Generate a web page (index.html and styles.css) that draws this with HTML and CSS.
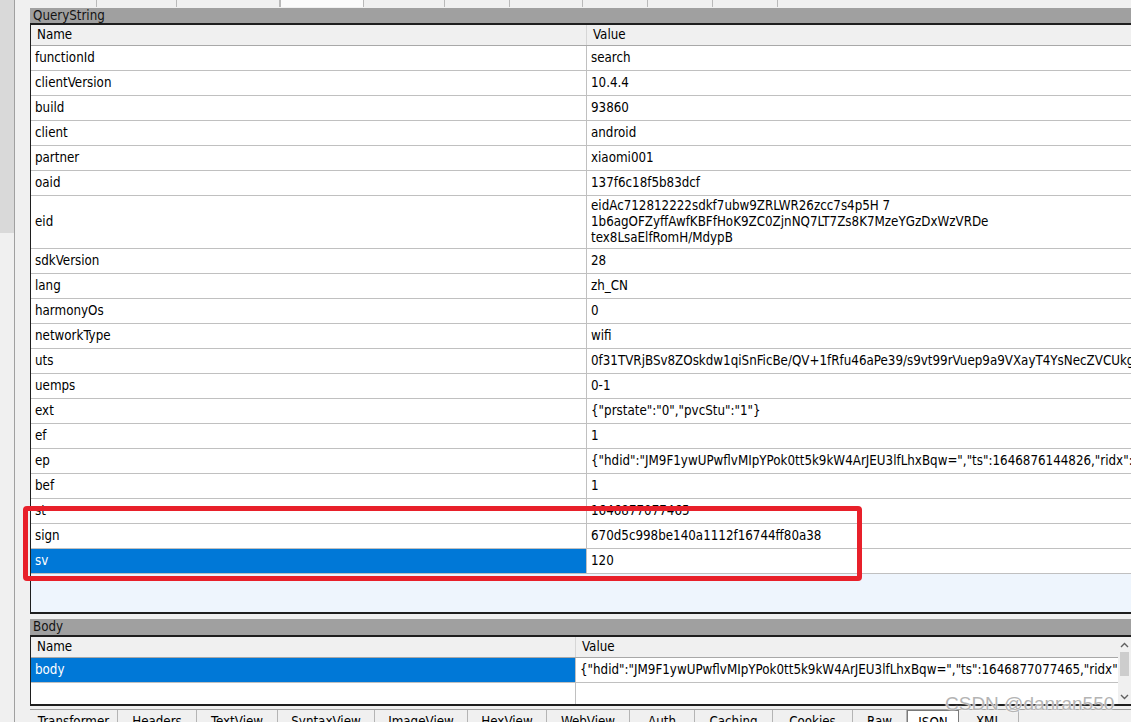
FILE: index.html
```html
<!DOCTYPE html>
<html>
<head>
<meta charset="utf-8">
<link rel="stylesheet" href="styles.css">
</head>
<body>
<div class="app">
  <div class="side">
    <div class="sscroll"><div class="sthumb"></div></div>
    <div class="sline"></div>
    <div class="sgap"></div>
  </div>
  <div class="main">
    <div class="toptabs">
      <div class="tt w67"></div>
      <div class="tt w80"></div>
      <div class="tt w103"></div>
      <div class="tt sel w84"></div>
      <div class="tt w81"></div>
      <div class="tt w65"></div>
      <div class="tt w73"></div>
      <div class="tt w65"></div>
      <div class="tt w65"></div>
      <div class="tt w65"></div>
    </div>

    <section class="panel">
      <div class="ptitle">QueryString</div>
      <div class="grid qs">
        <div class="hrow"><div class="hc">Name</div><div class="hc">Value</div></div>
        <div class="row"><div class="c n">functionId</div><div class="c v">search</div></div>
        <div class="row"><div class="c n">clientVersion</div><div class="c v">10.4.4</div></div>
        <div class="row"><div class="c n">build</div><div class="c v">93860</div></div>
        <div class="row"><div class="c n">client</div><div class="c v">android</div></div>
        <div class="row"><div class="c n">partner</div><div class="c v">xiaomi001</div></div>
        <div class="row"><div class="c n">oaid</div><div class="c v">137f6c18f5b83dcf</div></div>
        <div class="row tall"><div class="c n">eid</div><div class="c v">eidAc712812222sdkf7ubw9ZRLWR26zcc7s4p5H 7<br>1b6agOFZyffAwfKBFfHoK9ZC0ZjnNQ7LT7Zs8K7MzeYGzDxWzVRDe<br>tex8LsaElfRomH/MdypB</div></div>
        <div class="row"><div class="c n">sdkVersion</div><div class="c v">28</div></div>
        <div class="row"><div class="c n">lang</div><div class="c v">zh_CN</div></div>
        <div class="row"><div class="c n">harmonyOs</div><div class="c v">0</div></div>
        <div class="row"><div class="c n">networkType</div><div class="c v">wifi</div></div>
        <div class="row"><div class="c n">uts</div><div class="c v">0f31TVRjBSv8ZOskdw1qiSnFicBe/QV+1fRfu46aPe39/s9vt99rVuep9a9VXayT4YsNecZVCUkgW</div></div>
        <div class="row"><div class="c n">uemps</div><div class="c v">0-1</div></div>
        <div class="row"><div class="c n">ext</div><div class="c v">{"prstate":"0","pvcStu":"1"}</div></div>
        <div class="row"><div class="c n">ef</div><div class="c v">1</div></div>
        <div class="row"><div class="c n">ep</div><div class="c v">{"hdid":"JM9F1ywUPwflvMIpYPok0tt5k9kW4ArJEU3lfLhxBqw=","ts":1646876144826,"ridx":</div></div>
        <div class="row"><div class="c n">bef</div><div class="c v">1</div></div>
        <div class="row"><div class="c n">st</div><div class="c v">1646877077465</div></div>
        <div class="row"><div class="c n">sign</div><div class="c v">670d5c998be140a1112f16744ff80a38</div></div>
        <div class="row sel"><div class="c n">sv</div><div class="c v">120</div></div>
        <div class="fill"></div>
      </div>
    </section>

    <section class="panel bodypanel">
      <div class="ptitle">Body</div>
      <div class="bbox">
        <div class="grid bd">
          <div class="hrow"><div class="hc">Name</div><div class="hc">Value</div></div>
          <div class="row sel"><div class="c n">body</div><div class="c v">{"hdid":"JM9F1ywUPwflvMIpYPok0tt5k9kW4ArJEU3lfLhxBqw=","ts":1646877077465,"ridx"</div></div>
          <div class="erow"><div class="c n"></div><div class="c v"></div></div>
        </div>
        <div class="vscroll">
          <div class="arrow up"><svg width="9" height="6" viewBox="0 0 9 6"><path d="M1 5 L4.5 1.5 L8 5" fill="none" stroke="#606060" stroke-width="1.4"/></svg></div>
          <div class="vthumb"></div>
          <div class="vtrack"></div>
          <div class="arrow dn"><svg width="9" height="6" viewBox="0 0 9 6"><path d="M1 1 L4.5 4.5 L8 1" fill="none" stroke="#606060" stroke-width="1.4"/></svg></div>
        </div>
      </div>
    </section>

    <div class="bgap"></div>
    <div class="btabs">
      <div class="bt w88">Transformer</div>
      <div class="bt w79">Headers</div>
      <div class="bt w81">TextView</div>
      <div class="bt w97">SyntaxView</div>
      <div class="bt w93">ImageView</div>
      <div class="bt w79">HexView</div>
      <div class="bt w83">WebView</div>
      <div class="bt w65">Auth</div>
      <div class="bt w78">Caching</div>
      <div class="bt w80">Cookies</div>
      <div class="bt w54">Raw</div>
      <div class="bt selb w52">JSON</div>
      <div class="bt w60">XML</div>
    </div>
  </div>
</div>
<div class="redbox"></div>
<div class="wm">CSDN @danran550</div>
</body>
</html>
```

FILE: styles.css
```css
* { box-sizing: border-box; }
html, body { margin: 0; padding: 0; }
body {
  width: 1131px;
  height: 722px;
  overflow: hidden;
  background: #f0f0f0;
  font-family: "DejaVu Sans Condensed", "DejaVu Sans", sans-serif;
  font-size: 13.25px;
  color: #000;
  position: relative;
}
.app { display: flex; height: 722px; }

.side { width: 30px; flex: none; display: flex; }
.sscroll { width: 14px; background: #f0f0f0; }
.sthumb { height: 233px; background: #d9d9d9; }
.sline { width: 1px; background: #a0a0a0; }
.sgap { flex: 1; background: #f0f0f0; }

.main { width: 1101px; flex: none; display: flex; flex-direction: column; overflow: hidden; }

.toptabs { height: 8px; display: flex; flex: none; }
.tt { height: 7px; border-right: 1px solid #b9b9b9; background: #f0f0f0; flex: none; }
.tt.sel { background: #fbfbfb; border-left: 1px solid #b9b9b9; }
.w52 { width: 52px; } .w54 { width: 54px; } .w60 { width: 60px; } .w65 { width: 65px; }
.w67 { width: 67px; } .w73 { width: 73px; } .w78 { width: 78px; } .w79 { width: 79px; }
.w80 { width: 80px; } .w81 { width: 81px; } .w83 { width: 83px; } .w84 { width: 84px; }
.w88 { width: 88px; } .w93 { width: 93px; } .w97 { width: 97px; } .w103 { width: 103px; }

.panel { flex: none; }
.ptitle {
  height: 15px;
  line-height: 15px;
  background: #a0a0a0;
  padding-left: 3px;
  color: #141414;
  white-space: nowrap;
}
.bodypanel { margin-top: 5px; }
.bodypanel .ptitle { height: 16px; line-height: 15px; }

.grid {
  background: #fff;
  border-left: 1px solid #1e1e1e;
  border-top: 2px solid #1e1e1e;
  border-bottom: 2px solid #1e1e1e;
}
.hrow {
  display: grid;
  height: 21px;
  line-height: 20px;
  background: #f0f0f0;
  border-bottom: 1px solid #a8a8a8;
  white-space: nowrap;
}
.hc { padding-left: 6px; overflow: hidden; }
.hc:first-child { border-right: 1px solid #d6d6d6; }
.qs .hrow, .qs .row { grid-template-columns: 556px 1fr; }
.bd .hrow, .bd .row, .bd .erow { grid-template-columns: 545px 1fr; }

.row {
  display: grid;
  height: 25px;
  line-height: 24px;
  border-bottom: 1px solid #c0c0c0;
  white-space: nowrap;
}
.c { padding-left: 4px; overflow: hidden; }
.c.n { border-right: 1px solid #c0c0c0; }
.row.tall { height: 53px; }
.row.tall .n { line-height: 52px; }
.row.tall .v { line-height: 16px; padding-top: 2px; }
.row.sel .n { background: #0078d7; color: #fff; }
.fill { height: 38px; background: #eef5fd; }

.bbox { display: flex; }
.grid.bd { flex: 1; min-width: 0; }
.erow { display: grid; height: 21px; }
.vscroll {
  width: 13px;
  flex: none;
  background: #f0f0f0;
  border-top: 2px solid #1e1e1e;
  border-bottom: 2px solid #1e1e1e;
  display: flex;
  flex-direction: column;
}
.arrow { height: 15px; display: flex; align-items: center; justify-content: center; }
.vthumb { height: 24px; background: #cdcdcd; margin: 0 2px; }
.vtrack { flex: 1; }

.bgap { height: 4px; border-bottom: 1px solid #a0a0a0; flex: none; }
.btabs { display: flex; height: 20px; flex: none; }
.bt {
  flex: none;
  height: 20px;
  border-right: 1px solid #b4b4b4;
  text-align: center;
  line-height: 18px;
  padding-top: 3px;
  color: #000;
  white-space: nowrap;
}
.bt.selb { background: #fff; border: 1px solid #7a7a7a; }

.redbox {
  position: absolute;
  left: 23px;
  top: 506px;
  width: 839px;
  height: 75px;
  border: 5px solid #e8202a;
  border-radius: 4px;
}
.wm {
  position: absolute;
  left: 945px;
  top: 694px;
  font-family: "Liberation Sans", Arial, sans-serif;
  font-size: 19px;
  line-height: 20px;
  color: #b4b4b4;
  text-shadow: 0 0 2px #fff, 0 0 1px #fff;
  white-space: nowrap;
}
```
